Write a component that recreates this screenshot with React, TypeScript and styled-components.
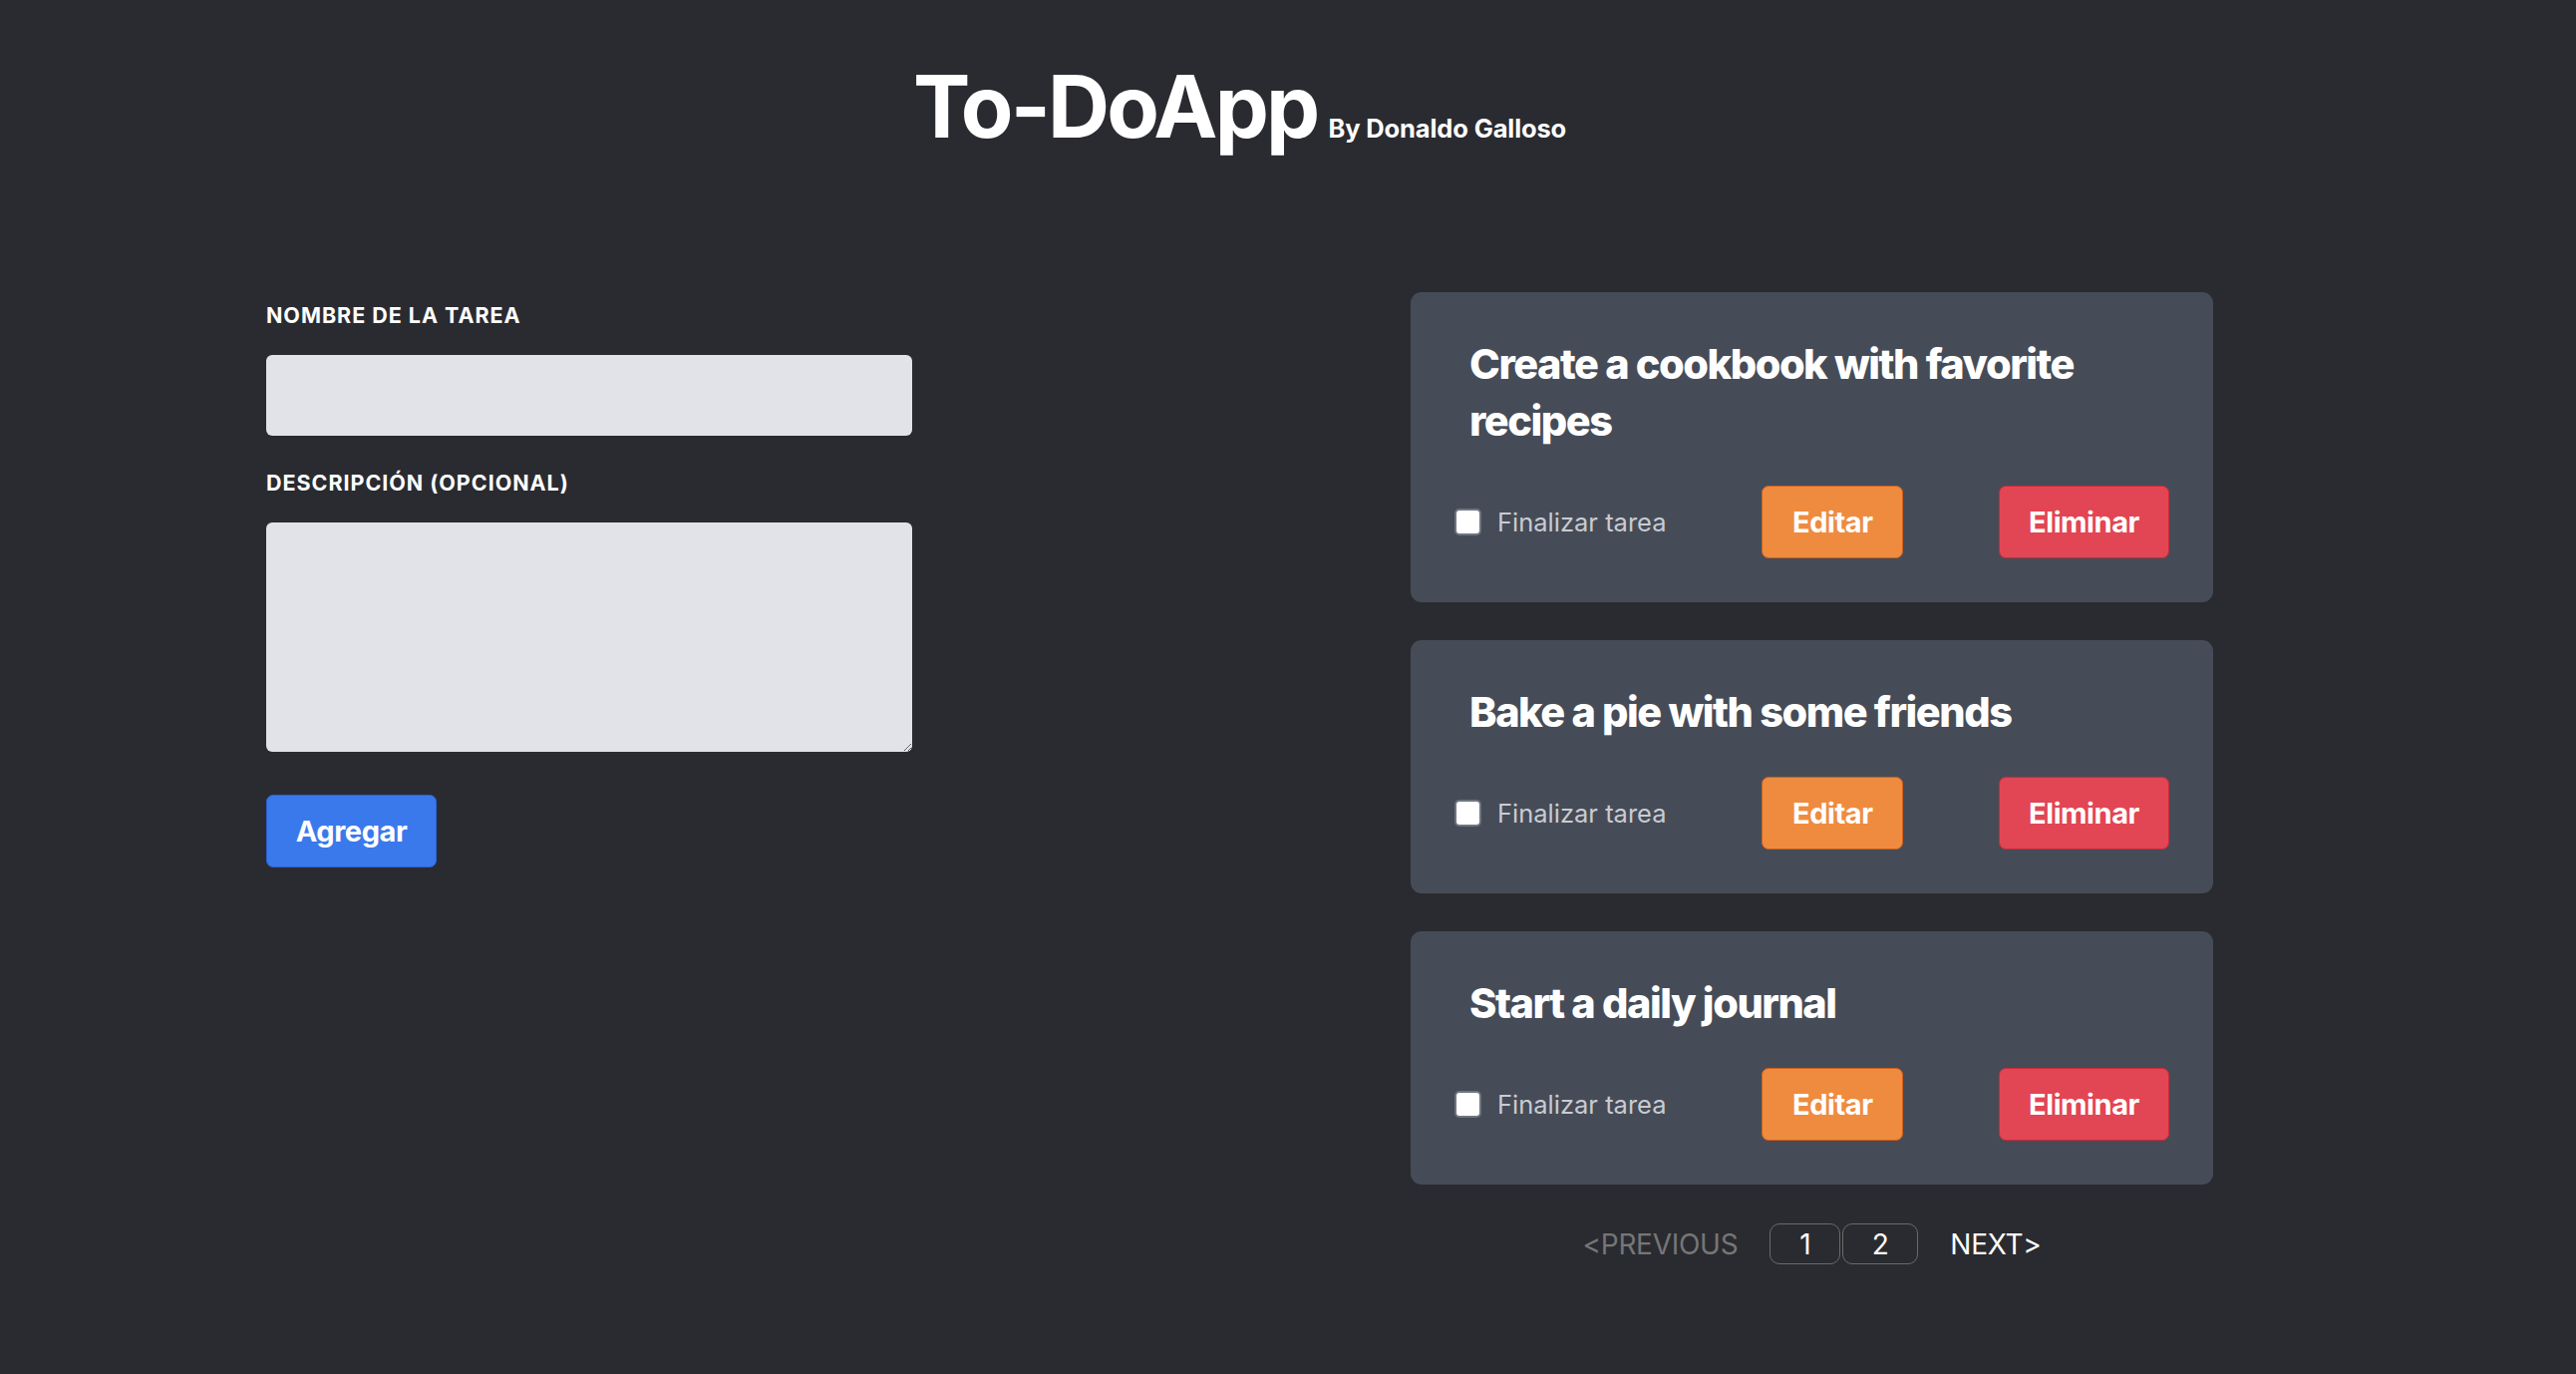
import React from "react";
import styled, { createGlobalStyle } from "styled-components";

const GlobalStyle = createGlobalStyle`
  html, body {
    margin: 0;
    padding: 0;
    background: #2a2b30;
  }
  body {
    font-family: Inter, "Noto Sans", "Liberation Sans", sans-serif;
    color: #ffffff;
  }
  * { box-sizing: border-box; }
`;

const Page = styled.div`
  min-height: 1378px;
  background: #2a2b30;
  padding: 65px 364px 0 267px;
`;

const Header = styled.header`
  display: flex;
  justify-content: center;
  align-items: baseline;
  gap: 11px;
  margin-bottom: 143px;
`;

const Title = styled.h1`
  margin: 0;
  font-size: 86px;
  line-height: 85px;
  font-weight: 700;
  letter-spacing: -0.033em;
`;

const Byline = styled.span`
  font-size: 25.5px;
  font-weight: 700;
  letter-spacing: -0.005em;
`;

const Main = styled.main`
  display: grid;
  grid-template-columns: 805px 805px;
  column-gap: 343px;
  align-items: start;
`;

const Form = styled.form`
  display: flex;
  flex-direction: column;
  width: 648px;
  padding-top: 8px;
`;

const Label = styled.label<{ $spaced?: boolean }>`
  display: block;
  font-size: 21.5px;
  line-height: 30px;
  font-weight: 700;
  text-transform: uppercase;
  letter-spacing: 0.045em;
  margin-top: ${(p) => (p.$spaced ? "32px" : "0")};
  margin-bottom: 25px;
`;

const TextInput = styled.input`
  width: 100%;
  height: 81px;
  border: none;
  border-radius: 6px;
  background: #e2e3e8;
  font-size: 24px;
  padding: 0 16px;
  outline: none;
`;

const TextArea = styled.textarea`
  width: 100%;
  height: 230px;
  border: none;
  border-radius: 6px;
  background: #e2e3e8;
  font-size: 24px;
  padding: 12px 16px;
  outline: none;
  resize: vertical;
  display: block;
`;

const ActionButton = styled.button<{ $tone: "blue" | "orange" | "red" }>`
  height: 73px;
  padding: 0 30px;
  border-radius: 7px;
  font-family: Inter, "Noto Sans", sans-serif;
  font-size: 29px;
  font-weight: 700;
  letter-spacing: -0.015em;
  color: #ffffff;
  cursor: pointer;
  background: ${(p) =>
    p.$tone === "blue" ? "#3a79ec" : p.$tone === "orange" ? "#ef8b3e" : "#e24553"};
  border: 1.5px solid
    ${(p) =>
      p.$tone === "blue" ? "#2b62d6" : p.$tone === "orange" ? "#cf5f1c" : "#c92a3a"};
`;

const SubmitButton = styled(ActionButton)`
  align-self: flex-start;
  margin-top: 43px;
  width: 171px;
  padding: 0;
`;

const TaskColumn = styled.section`
  display: flex;
  flex-direction: column;
`;

const TaskList = styled.div`
  display: flex;
  flex-direction: column;
  gap: 38px;
`;

const Card = styled.article`
  background: #464c57;
  border-radius: 11px;
  padding: 44px;
  display: flex;
  flex-direction: column;
  gap: 36px;
`;

const CardTitle = styled.h2`
  margin: 0;
  padding-left: 15px;
  padding-right: 60px;
  font-size: 41.5px;
  line-height: 57px;
  font-weight: 800;
  letter-spacing: -0.035em;
`;

const CardRow = styled.div`
  display: flex;
  align-items: center;
  justify-content: space-between;
`;

const CheckLabel = styled.label`
  display: flex;
  align-items: center;
  gap: 16px;
  font-size: 25.5px;
  color: #c8cbd2;
`;

const CheckBox = styled.input`
  appearance: none;
  margin: 0;
  width: 27px;
  height: 27px;
  border-radius: 5px;
  background: #ffffff;
  border: 2px solid #6f7580;
`;

const EditButton = styled(ActionButton)`
  width: 142px;
  padding: 0;
`;

const DeleteButton = styled(ActionButton)`
  width: 171px;
  padding: 0;
`;

const Pager = styled.nav`
  margin-top: 39px;
  display: flex;
  justify-content: center;
  align-items: center;
  gap: 32px;
  font-size: 28px;
`;

const PagerLink = styled.span<{ $disabled?: boolean }>`
  color: ${(p) => (p.$disabled ? "#767676" : "#ffffff")};
  letter-spacing: -0.01em;
`;

const PageNumbers = styled.div`
  display: flex;
  gap: 2px;
`;

const PageBox = styled.span<{ $wide?: boolean }>`
  display: flex;
  align-items: center;
  justify-content: center;
  width: ${(p) => (p.$wide ? "76px" : "71px")};
  height: 41px;
  border: 1.5px solid #6a6a6a;
  border-radius: 10px;
  color: #ffffff;
`;

const tasks = [
  { id: 1, title: "Create a cookbook with favorite recipes" },
  { id: 2, title: "Bake a pie with some friends" },
  { id: 3, title: "Start a daily journal" },
];

export default function App() {
  return (
    <>
      <GlobalStyle />
      <Page>
        <Header>
          <Title>To-DoApp</Title>
          <Byline>By Donaldo Galloso</Byline>
        </Header>
        <Main>
          <Form onSubmit={(e) => e.preventDefault()}>
            <Label htmlFor="name">Nombre de la tarea</Label>
            <TextInput id="name" type="text" />
            <Label htmlFor="desc" $spaced>
              Descripción (opcional)
            </Label>
            <TextArea id="desc" />
            <SubmitButton $tone="blue" type="submit">
              Agregar
            </SubmitButton>
          </Form>
          <TaskColumn>
            <TaskList>
              {tasks.map((t) => (
                <Card key={t.id}>
                  <CardTitle>{t.title}</CardTitle>
                  <CardRow>
                    <CheckLabel>
                      <CheckBox type="checkbox" />
                      Finalizar tarea
                    </CheckLabel>
                    <EditButton $tone="orange">Editar</EditButton>
                    <DeleteButton $tone="red">Eliminar</DeleteButton>
                  </CardRow>
                </Card>
              ))}
            </TaskList>
            <Pager>
              <PagerLink $disabled>&lt;PREVIOUS</PagerLink>
              <PageNumbers>
                <PageBox>1</PageBox>
                <PageBox $wide>2</PageBox>
              </PageNumbers>
              <PagerLink>NEXT&gt;</PagerLink>
            </Pager>
          </TaskColumn>
        </Main>
      </Page>
    </>
  );
}
